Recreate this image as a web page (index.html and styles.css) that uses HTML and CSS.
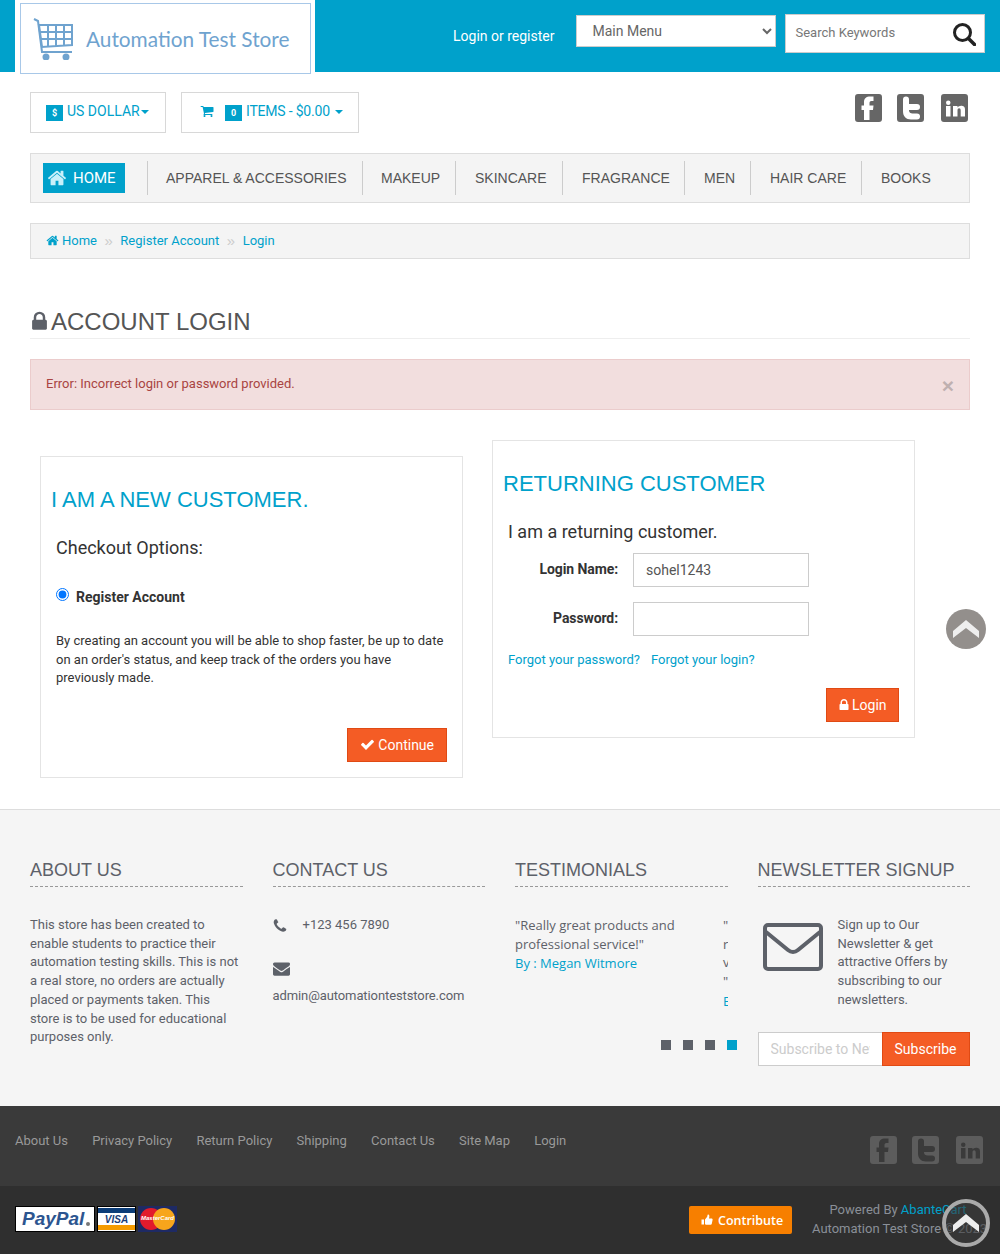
FILE: index.html
```html
<!DOCTYPE html>
<html lang="en">
<head>
  <meta charset="UTF-8">
  <title>Account Login - Automation Test Store</title>
  <link rel="stylesheet" href="styles.css">
</head>
<body>
  <svg class="sprites" width="0" height="0">
    <symbol id="i-home" viewBox="0 0 1792 1792"><path d="M1472 992v480q0 26-19 45t-45 19h-384v-384h-256v384h-384q-26 0-45-19t-19-45v-480q0-1 .5-3t.5-3l575-474 575 474q1 2 1 6zm223-69l-62 74q-8 9-21 11h-3q-13 0-21-7l-692-577-692 577q-12 8-24 7-13-2-21-11l-62-74q-8-10-7-23.500t11-21.500l719-599q32-26 76-26t76 26l244 204v-195q0-14 9-23t23-9h192q14 0 23 9t9 23v408l219 182q10 8 11 21.500t-7 23.500z"/></symbol>
    <symbol id="i-lock" viewBox="0 0 1792 1792"><path d="M640 768h512v-192q0-106-75-181t-181-75-181 75-75 181v192zm832 96v576q0 40-28 68t-68 28h-960q-40 0-68-28t-28-68v-576q0-40 28-68t68-28h32v-192q0-184 132-316t316-132 316 132 132 316v192h32q40 0 68 28t28 68z"/></symbol>
    <symbol id="i-cart" viewBox="0 0 1792 1792"><path d="M704 1536q0 52-38 90t-90 38-90-38-38-90 38-90 90-38 90 38 38 90zm896 0q0 52-38 90t-90 38-90-38-38-90 38-90 90-38 90 38 38 90zm128-1088v512q0 24-16.500 42.500t-40.500 21.500l-1044 122q13 60 13 70 0 16-24 64h920q26 0 45 19t19 45-19 45-45 19h-1024q-26 0-45-19t-19-45q0-11 8-31.500t16-36 21.500-40 15.500-29.500l-177-823h-204q-26 0-45-19t-19-45 19-45 45-19h256q16 0 28.500 6.500t19.500 15.500 13 24.500 8 26 5.500 29.500 4.500 26h1201q26 0 45 19t19 45z"/></symbol>
    <symbol id="i-check" viewBox="0 0 1792 1792"><path d="M1671 566q0 40-28 68l-724 724-136 136q-28 28-68 28t-68-28l-136-136-362-362q-28-28-28-68t28-68l136-136q28-28 68-28t68 28l294 295 656-657q28-28 68-28t68 28l136 136q28 28 28 68z"/></symbol>
    <symbol id="i-phone" viewBox="0 0 1792 1792"><path d="M1600 1240q0 27-10 70.500t-21 68.500q-21 50-122 106-94 51-186 51-27 0-53-3.500t-57.500-12.500-47-14.500-55.500-20.500-49-18q-98-35-175-83-127-79-264-216t-216-264q-48-77-83-175-3-9-18-49t-20.500-55.500-14.500-47-12.500-57.500-3.500-53q0-92 51-186 56-101 106-122 25-11 68.500-21t70.500-10q14 0 21 3 18 6 53 76 11 19 30 54t35 63.500 31 53.500q3 4 17.500 25t21.500 35.500 7 28.500q0 20-28.500 50t-62 55-62 53-28.500 46q0 9 5 22.500t8.500 20.500 14 24 11.500 19q76 137 174 235t235 174q2 1 19 11.500t24 14 20.500 8.500 22.500 5q18 0 46-28.500t53-62 55-62 50-28.500q14 0 28.500 7t35.500 21.500 25 17.500q25 15 53.500 31t63.500 35 54 30q70 35 76 53 3 7 3 21z"/></symbol>
    <symbol id="i-mail" viewBox="0 0 1792 1792"><path d="M1792 710v794q0 66-47 113t-113 47h-1472q-66 0-113-47t-47-113v-794q44 49 101 87 362 246 497 345 57 42 92.500 65.500t94.500 48 110 24.500h2q51 0 110-24.500t94.500-48 92.500-65.500q170-123 498-345 57-39 100-87zm0-294q0 79-49 151t-122 123q-376 261-468 325-10 7-42.500 30.500t-54 38-52 32.500-57.500 27-50 9h-2q-23 0-50-9t-57.500-27-52-32.500-54-38-42.500-30.500q-91-64-262-182.500t-205-142.500q-62-42-117-115.500t-55-136.500q0-78 41.500-130t118.500-52h1472q65 0 112.500 47t47.500 113z"/></symbol>
    <symbol id="i-thumb" viewBox="0 0 24 24"><path d="M1 11h5v10H1zM8 11l4-5c.6-1 1-2 1-4 0-1 1-1.500 2-1 1.500.8 2 3 1.500 5L16 9h5c1.500 0 2.500 1.200 2.200 2.700l-1.600 8c-.3 1-1 1.800-2.200 1.800H11c-1.500 0-3-.6-3-2z"/></symbol>
    <symbol id="i-fb" viewBox="0 0 27 28"><path fill-rule="evenodd" d="M3 0h21a3 3 0 0 1 3 3v22a3 3 0 0 1-3 3H3a3 3 0 0 1-3-3V3a3 3 0 0 1 3-3zM9 26h5.500V16H18l.5-4.500h-4V9c0-1.300.7-2 2-2h2V2.500h-3c-4.500 0-6.500 2-6.500 5.500v3.500H6.500V16H9z"/></symbol>
    <symbol id="i-tw" viewBox="0 0 27 28"><path fill-rule="evenodd" d="M3 0h21a3 3 0 0 1 3 3v22a3 3 0 0 1-3 3H3a3 3 0 0 1-3-3V3a3 3 0 0 1 3-3zM6 5.500V17c0 5.500 3 8.500 8 8.500h6a3 3 0 0 0 0-6h-4.500c-2 0-3.500-1-3.500-3V16h8a3 3 0 0 0 0-6h-8V5.500a3 3 0 0 0-6 0z"/></symbol>
    <symbol id="i-in" viewBox="0 0 27 28"><path fill-rule="evenodd" d="M3 0h21a3 3 0 0 1 3 3v22a3 3 0 0 1-3 3H3a3 3 0 0 1-3-3V3a3 3 0 0 1 3-3zM5 12v10.500h4.500V12zM7.250 6.500a2.250 2.250 0 1 0 0 4.500 2.250 2.250 0 0 0 0-4.500zM12 12v10.500h4.500v-6c0-1.400.6-2.200 1.600-2.200s1.600.8 1.600 2.200v6h4.300v-7c0-3-1.700-3.800-3.900-3.800-1.600 0-2.700.7-3.600 1.800V12z"/></symbol>
  </svg>

  <header class="topbar">
    <a class="logo" href="#">
      <svg class="logo-cart" viewBox="0 0 40 42" fill="none" stroke="#6fa3cf" stroke-width="2">
        <path d="M1 1l4 2 4 31h30"/>
        <path d="M6 7h33v20L9 29zM7 14h32M8 21h31M15 7v21M23 7v21M31 7v20"/>
        <circle cx="13" cy="39" r="2.500" fill="#6fa3cf"/><circle cx="33" cy="39" r="2.500" fill="#6fa3cf"/>
      </svg>
      <span class="logo-text">Automation Test Store</span>
    </a>
    <a class="login-link" href="#">Login or register</a>
    <select class="main-menu">
      <option>Main Menu</option>
    </select>
    <div class="search">
      <input type="text" placeholder="Search Keywords">
      <svg viewBox="0 0 24 24" fill="none" stroke="#222" stroke-width="3"><circle cx="10.500" cy="10.500" r="8"/><path d="M16.500 16.500l6 6" stroke-linecap="round" stroke-width="3.500"/></svg>
    </div>
  </header>

  <div class="page">
    <div class="tools">
      <div class="drop drop-currency"><span class="badge">$</span> US DOLLAR<i class="caret"></i></div>
      <div class="drop drop-cart">
        <svg class="icon cart-icon"><use href="#i-cart"/></svg>
        <span class="badge">0</span> ITEMS - $0.00 <i class="caret caret-gap"></i>
      </div>
      <div class="social">
        <a href="#"><svg><use href="#i-fb"/></svg></a>
        <a href="#"><svg><use href="#i-tw"/></svg></a>
        <a href="#"><svg><use href="#i-in"/></svg></a>
      </div>
    </div>

    <nav class="menu">
      <a class="home" href="#"><svg class="icon"><use href="#i-home"/></svg>HOME</a>
      <a class="item item-apparel" href="#">APPAREL &amp; ACCESSORIES</a>
      <a class="item item-makeup" href="#">MAKEUP</a>
      <a class="item item-skincare" href="#">SKINCARE</a>
      <a class="item item-fragrance" href="#">FRAGRANCE</a>
      <a class="item item-men" href="#">MEN</a>
      <a class="item item-hair" href="#">HAIR CARE</a>
      <a class="item item-books" href="#">BOOKS</a>
    </nav>

    <div class="crumbs">
      <a href="#"><svg class="icon"><use href="#i-home"/></svg>Home</a><span class="sep">»</span><a href="#">Register Account</a><span class="sep">»</span><a href="#">Login</a>
    </div>

    <h1 class="title"><svg class="icon"><use href="#i-lock"/></svg>ACCOUNT LOGIN</h1>

    <div class="alert">Error: Incorrect login or password provided.<span class="close">×</span></div>

    <div class="accounts">
      <section class="card card-new">
        <h2>I AM A NEW CUSTOMER.</h2>
        <h3>Checkout Options:</h3>
        <label class="radio"><input type="radio" checked> Register Account</label>
        <p>By creating an account you will be able to shop faster, be up to date on an order's status, and keep track of the orders you have previously made.</p>
        <div class="actions"><a class="btn" href="#"><svg class="icon"><use href="#i-check"/></svg>Continue</a></div>
      </section>
      <section class="card card-old">
        <h2>RETURNING CUSTOMER</h2>
        <h3>I am a returning customer.</h3>
        <div class="field"><label>Login Name:</label><input type="text" value="sohel1243"></div>
        <div class="field"><label>Password:</label><input type="password"></div>
        <div class="forgot"><a href="#">Forgot your password?</a><a href="#">Forgot your login?</a></div>
        <div class="actions"><a class="btn btn-login" href="#"><svg class="icon"><use href="#i-lock"/></svg>Login</a></div>
      </section>
    </div>
  </div>

  <footer>
    <div class="foot-top">
      <div class="foot-col">
        <h4>ABOUT US</h4>
        <p>This store has been created to enable students to practice their automation testing skills. This is not a real store, no orders are actually placed or payments taken. This store is to be used for educational purposes only.</p>
      </div>
      <div class="foot-col">
        <h4>CONTACT US</h4>
        <div class="phone"><svg class="icon"><use href="#i-phone"/></svg>+123 456 7890</div>
        <svg class="icon mail-icon"><use href="#i-mail"/></svg>
        <div class="email">admin@automationteststore.com</div>
      </div>
      <div class="foot-col">
        <h4>TESTIMONIALS</h4>
        <div class="slides">
          <div class="slide">"Really great products and professional service!"<span class="by">By : Megan Witmore</span></div>
          <div class="slide slide-next">"<br>r<br>v<br>"<span class="by">E</span></div>
        </div>
        <div class="dots"><i></i><i></i><i></i><i class="on"></i></div>
      </div>
      <div class="foot-col">
        <h4>NEWSLETTER SIGNUP</h4>
        <div class="news">
          <svg viewBox="0 0 60 48" fill="none" stroke="#5d6169" stroke-width="4" stroke-linejoin="round"><rect x="2" y="2" width="56" height="44" rx="3"/><path d="M3 9l22 18c3 2.500 7 2.500 10 0L57 9"/></svg>
          <p>Sign up to Our Newsletter &amp; get attractive Offers by subscribing to our newsletters.</p>
        </div>
        <div class="subscribe"><input type="text" placeholder="Subscribe to Newsletter"><button>Subscribe</button></div>
      </div>
    </div>

    <div class="foot-links">
      <a href="#">About Us</a><a href="#">Privacy Policy</a><a href="#">Return Policy</a><a href="#">Shipping</a><a href="#">Contact Us</a><a href="#">Site Map</a><a href="#">Login</a>
      <div class="social">
        <a href="#"><svg><use href="#i-fb"/></svg></a>
        <a href="#"><svg><use href="#i-tw"/></svg></a>
        <a href="#"><svg><use href="#i-in"/></svg></a>
      </div>
    </div>

    <div class="foot-bottom">
      <div class="pay">
        <span class="pay-paypal">PayPal</span>
        <span class="pay-visa"><b>VISA</b></span>
        <span class="pay-mc"><span class="mc-red"></span><span class="mc-yellow"></span><em>MasterCard</em></span>
      </div>
      <a class="contribute" href="#"><svg class="icon"><use href="#i-thumb"/></svg>Contribute</a>
      <div class="powered">Powered By <a href="#">AbanteCart</a><br>Automation Test Store © 2023</div>
    </div>
  </footer>

  <a class="to-top to-top-mid" href="#"><svg viewBox="0 0 26 18"><path d="M13 0l13 11v7L13 8 0 18v-7z"/></svg></a>
  <a class="to-top to-top-end" href="#"><svg viewBox="0 0 26 18"><path d="M13 0l13 11v7L13 8 0 18v-7z"/></svg></a>
</body>
</html>
```

FILE: styles.css
```css
* {
  box-sizing: border-box;
}
html, body {
  margin: 0;
  padding: 0;
}
body {
  position: relative;
  width: 1000px;
  height: 1254px;
  overflow: hidden;
  font-family: Roboto, "Liberation Sans", sans-serif;
  font-size: 13px;
  color: #333;
  background: #fff;
}
a {
  color: #00a1cb;
  text-decoration: none;
}
.sprites {
  position: absolute;
}
.icon {
  width: 1em;
  height: 1em;
  fill: currentColor;
  flex: none;
}

/* top bar */
.topbar {
  display: flex;
  align-items: flex-start;
  height: 72px;
  padding-left: 15px;
  background: #00a1cb;
}
.logo {
  display: flex;
  align-items: center;
  flex: none;
  width: 291px;
  height: 71px;
  margin: 3px 4px 0 5px;
  border: 1px solid #a8c8e8;
  background: #fff;
  box-shadow: 0 0 0 5px #fff;
  clip-path: inset(-3px -4px 0 -5px);
  padding-left: 12px;
}
.logo-cart {
  width: 40px;
  height: 42px;
  flex: none;
}
.logo-text {
  margin-left: 13px;
  font-family: Lato, sans-serif;
  font-size: 20.800px;
  color: #6fa3cf;
}
.login-link {
  margin: 28px 0 0 138px;
  color: #fff;
  font-size: 14px;
  line-height: 17px;
}
.main-menu {
  width: 200px;
  height: 32px;
  margin: 15px 0 0 22px;
  padding-left: 11px;
  border: 1px solid #ccc;
  border-radius: 0;
  background: #fff;
  font-family: Roboto, sans-serif;
  font-size: 14px;
  color: #666;
}
.search {
  position: relative;
  width: 200px;
  height: 39px;
  margin: 14px 0 0 9px;
  border: 1px solid #ccc;
  background: #fff;
}
.search input {
  width: 100%;
  height: 100%;
  padding: 0 10px 3px 9px;
  border: 0;
  font-family: Roboto, sans-serif;
  font-size: 13px;
}
.search input::placeholder {
  color: #777;
}
.search svg {
  position: absolute;
  right: 8px;
  top: 7px;
  width: 24px;
  height: 24px;
}

/* tools row */
.page {
  padding: 20px 30px 0;
}
.tools {
  display: flex;
  align-items: flex-start;
  height: 41px;
}
.drop {
  display: flex;
  align-items: center;
  height: 41px;
  padding: 0 0 3px 15px;
  border: 1px solid #d8d8d8;
  color: #00a1cb;
  font-size: 14px;
}
.drop-currency {
  width: 136px;
}
.drop-cart {
  width: 178px;
  margin-left: 15px;
  padding-left: 18px;
  letter-spacing: -0.2px;
}
.cart-icon {
  width: 14px;
  height: 14px;
  margin-right: 11px;
}
.badge {
  display: inline-block;
  width: 17px;
  height: 16px;
  margin: 4px 4px 0 0;
  background: #00a1cb;
  color: #fff;
  font-size: 9px;
  font-weight: 700;
  line-height: 16px;
  text-align: center;
}
.caret {
  width: 0;
  height: 0;
  margin: 2px 0 0 1px;
  border: 4px solid transparent;
  border-top-color: #00a1cb;
  border-bottom: 0;
}
.caret-gap {
  margin-left: 5px;
}
.social {
  display: flex;
  margin-left: auto;
  margin-top: 2px;
  margin-right: 2px;
  color: #666;
}
.social a {
  display: block;
  height: 28px;
  color: inherit;
}
.social a + a {
  margin-left: 15px;
}
.social a:last-child {
  margin-left: 17px;
}
.social svg {
  width: 27px;
  height: 28px;
  fill: currentColor;
}

/* main menu */
.menu {
  display: flex;
  align-items: center;
  height: 50px;
  margin-top: 20px;
  padding: 0 0 0 12px;
  border: 1px solid #ddd;
  background: #f4f4f4;
}
.home {
  display: flex;
  align-items: center;
  width: 82px;
  height: 30px;
  margin-right: 22px;
  padding-left: 4px;
  background: #00a1cb;
  color: #fff;
  font-size: 15px;
}
.home .icon {
  width: 20px;
  height: 20px;
  margin-right: 6px;
  color: #c8f0fa;
}
.item {
  display: flex;
  align-items: center;
  height: 34px;
  border-left: 1px solid #ccc;
  color: #555;
  font-family: "Liberation Sans", sans-serif;
  font-size: 14px;
  padding-left: 18px;
}
.item-apparel { width: 215px; }
.item-makeup { width: 93px; }
.item-skincare { width: 107px; padding-left: 19px; }
.item-fragrance { width: 122px; padding-left: 19px; }
.item-men { width: 66px; padding-left: 19px; }
.item-hair { width: 111px; padding-left: 19px; }
.item-books { padding-left: 19px; }

/* breadcrumb */
.crumbs {
  display: flex;
  align-items: center;
  height: 36px;
  margin-top: 20px;
  padding: 0 0 1px 15px;
  border: 1px solid #ddd;
  background: #f4f4f4;
}
.crumbs a {
  display: flex;
  align-items: center;
}
.crumbs .icon {
  width: 13px;
  height: 13px;
  margin-right: 3px;
}
.sep {
  margin: 0 7.500px;
  color: #ccc;
  font-family: "Liberation Sans", sans-serif;
  font-size: 15px;
}

/* heading and alert */
.title {
  display: flex;
  align-items: center;
  height: 34px;
  margin: 46px 0 0;
  border-bottom: 1px solid #eee;
  font-family: "Liberation Sans", sans-serif;
  font-size: 24px;
  font-weight: 400;
  color: #555;
}
.title .icon {
  width: 23px;
  height: 23px;
  margin: 0 .5px 0 -2.500px;
  color: #5d6169;
}
.alert {
  display: flex;
  justify-content: space-between;
  height: 51px;
  margin-top: 20px;
  padding: 15px 15px 0;
  border: 1px solid #ebcccc;
  background: #f2dede;
  color: #a94442;
  line-height: 18px;
}
.close {
  margin-top: 1px;
  color: #bfb0b0;
  font-family: "Liberation Sans", sans-serif;
  font-size: 21px;
  font-weight: 700;
  line-height: 20px;
}

/* login cards */
.accounts {
  display: flex;
  align-items: flex-start;
  margin-top: 30px;
  padding-left: 10px;
}
.card {
  width: 423px;
  border: 1px solid #e4e4e4;
  padding: 0 15px;
}
.card h2 {
  margin: 29px 0 0 -5px;
  color: #00a1cb;
  font-family: "Liberation Sans", sans-serif;
  font-size: 22px;
  font-weight: 400;
  line-height: 28px;
}
.card h3 {
  margin: 22px 0 0;
  font-size: 18px;
  font-weight: 400;
  line-height: 24px;
}
.card-new {
  height: 322px;
  margin-top: 16px;
}
.radio {
  display: flex;
  align-items: flex-start;
  margin-top: 29px;
  font-weight: 700;
  font-size: 14px;
  line-height: 16px;
}
.radio input {
  width: 13px;
  height: 13px;
  margin: -1px 7px 0 0;
}
.card p {
  margin: 27px 0 0;
  line-height: 18.600px;
}
.card .actions {
  display: flex;
  justify-content: flex-end;
}
.card-new .actions {
  margin-top: 40px;
}
.card-old {
  height: 298px;
  margin-left: 29px;
}
.field {
  display: flex;
  align-items: center;
  height: 34px;
  margin-top: 15px;
}
.card-old h3 + .field {
  margin-top: 9px;
}
.field label {
  width: 110px;
  margin-right: 15px;
  padding-bottom: 3px;
  text-align: right;
  font-weight: 700;
  font-size: 14px;
  letter-spacing: -0.1px;
}
.field input {
  width: 176px;
  height: 34px;
  padding: 0 12px;
  border: 1px solid #ccc;
  font-family: Roboto, sans-serif;
  font-size: 14px;
  color: #555;
}
.forgot {
  margin-top: 15px;
  line-height: 18px;
}
.forgot a + a {
  margin-left: 11px;
}
.card-old .actions {
  margin-top: 19px;
}
.btn {
  display: flex;
  align-items: center;
  height: 34px;
  padding: 0 12px;
  border: 1px solid #e04a14;
  background: #f45c25;
  color: #fff;
  font-size: 14px;
}
.btn .icon {
  width: 15px;
  height: 15px;
  margin-right: 3px;
}
.btn-login {
  width: 73px;
}
.btn-login .icon {
  width: 14px;
  height: 14px;
  margin: 0 1px 0 -2px;
}

/* footer */
footer {
  position: absolute;
  left: 0;
  right: 0;
  top: 809px;
}
.foot-top {
  display: grid;
  grid-template-columns: repeat(4, 212.500px);
  column-gap: 30px;
  height: 297px;
  padding: 50px 30px 0;
  border-top: 1px solid #ddd;
  background: #f5f5f5;
  color: #5d6169;
}
.foot-col h4 {
  height: 27px;
  margin: 0 0 29px;
  border-bottom: 1px dashed #999;
  font-family: "Liberation Sans", sans-serif;
  font-size: 18px;
  font-weight: 400;
  line-height: 20px;
  color: #5d6169;
}
.foot-col p {
  margin: 0;
  line-height: 18.700px;
}
.phone {
  display: flex;
  align-items: center;
  margin-top: -1px;
  line-height: 18px;
}
.phone .icon {
  width: 16px;
  height: 16px;
  margin: 3px 15px 0 -1px;
}
.mail-icon {
  display: block;
  width: 17px;
  height: 17px;
  margin-top: 26px;
}
.email {
  margin-top: 11px;
  letter-spacing: -0.1px;
}
.slides {
  display: flex;
  overflow: hidden;
  font-family: "Open Sans", sans-serif;
  font-size: 13px;
  line-height: 18.700px;
}
.slide {
  flex: none;
  width: 208px;
  padding-right: 40px;
}
.by {
  display: block;
  color: #00a1cb;
  margin-top: 1px;
}
.dots {
  display: flex;
  justify-content: flex-end;
  gap: 12px;
  margin: 29px -9px 0 0;
}
.dots i {
  width: 10px;
  height: 10px;
  background: #5d6169;
}
.dots i.on {
  background: #00a1cb;
}
.news {
  display: flex;
}
.news svg {
  width: 60px;
  height: 48px;
  margin: 7px 0 0 5px;
  flex: none;
}
.foot-col .news p {
  margin-left: 15px;
}
.subscribe {
  display: flex;
  height: 34px;
  margin-top: 22px;
}
.subscribe input {
  width: 124px;
  height: 34px;
  padding: 0 12px;
  border: 1px solid #ccc;
  border-right: 0;
  background: #fff;
  font-family: Roboto, sans-serif;
  font-size: 14px;
}
.subscribe input::placeholder {
  color: #ccc;
}
.subscribe button {
  width: 88px;
  height: 34px;
  border: 1px solid #e04a14;
  background: #f45c25;
  color: #fff;
  font-family: Roboto, sans-serif;
  font-size: 14px;
}
.foot-links {
  display: flex;
  height: 80px;
  padding: 26px 0 0 15px;
  background: #3a3a3a;
  line-height: 18px;
}
.foot-links > a {
  margin-right: 24.200px;
  color: #999;
}
.foot-links .social {
  margin: 4px 17px 0 auto;
  color: #5c5c5c;
}
.foot-bottom {
  display: flex;
  align-items: flex-start;
  height: 68px;
  padding: 20px 0 0 15px;
  background: #2f2f2f;
}
.pay {
  display: flex;
  gap: 2px;
}
.pay-paypal, .pay-visa {
  height: 26px;
  border: 1px solid #000;
  background: #fff;
  font-family: "Liberation Sans", sans-serif;
  font-style: italic;
  font-weight: 700;
}
.pay-paypal {
  position: relative;
  width: 80px;
  color: #2c5590;
  font-size: 19px;
  line-height: 24px;
  padding-left: 6px;
}
.pay-paypal::after {
  content: "";
  position: absolute;
  right: 4px;
  top: 15px;
  width: 4px;
  height: 4px;
  border-radius: 50%;
  background: #777;
}
.pay-visa {
  width: 39px;
  padding: 1px;
  color: #1a3e78;
  font-size: 10px;
  text-align: center;
  background: linear-gradient(#fff 1px, #0c3d78 1px, #0c3d78 6px, #fff 6px, #fff 18px, #f59b00 18px, #f59b00 23px, #fff 23px);
}
.pay-visa b {
  display: block;
  height: 24px;
  line-height: 23px;
}
.pay-mc {
  position: relative;
  width: 39px;
  height: 26px;
  background: #1e2a64;
  overflow: hidden;
}
.mc-red, .mc-yellow {
  position: absolute;
  top: 2px;
  width: 22px;
  height: 22px;
  border-radius: 50%;
}
.mc-red {
  left: 2px;
  background: #e21b2c;
}
.mc-yellow {
  right: 2px;
  background: #f7a51c;
}
.pay-mc em {
  position: absolute;
  left: 3px;
  top: 8px;
  color: #fff;
  font-family: "Liberation Sans", sans-serif;
  font-size: 6px;
  font-weight: 700;
  line-height: 9px;
  white-space: nowrap;
}
.contribute {
  display: flex;
  align-items: center;
  width: 103px;
  height: 28px;
  margin-left: 512px;
  padding: 0 0 0 12px;
  border-radius: 2px;
  background: #f77f00;
  color: #fff;
  font-family: "Open Sans", sans-serif;
  font-size: 12.500px;
  font-weight: 600;
}
.contribute .icon {
  width: 12px;
  height: 12px;
  margin-right: 5px;
}
.powered {
  width: 172px;
  margin: -6px 0 0 20px;
  text-align: center;
  color: #8a8f98;
  line-height: 19px;
  white-space: nowrap;
}

/* scroll to top buttons */
.to-top {
  position: absolute;
  display: flex;
  align-items: center;
  justify-content: center;
  border-radius: 50%;
}
.to-top-mid {
  left: 946px;
  top: 609px;
  width: 40px;
  height: 40px;
  background: #938f8c;
}
.to-top-end {
  left: 942px;
  top: 1199px;
  width: 48px;
  height: 48px;
  border: 4px solid #aaa;
  background: rgba(60, 60, 60, 0.6);
}
.to-top svg {
  width: 26px;
  height: 18px;
  fill: #eee;
}
```
